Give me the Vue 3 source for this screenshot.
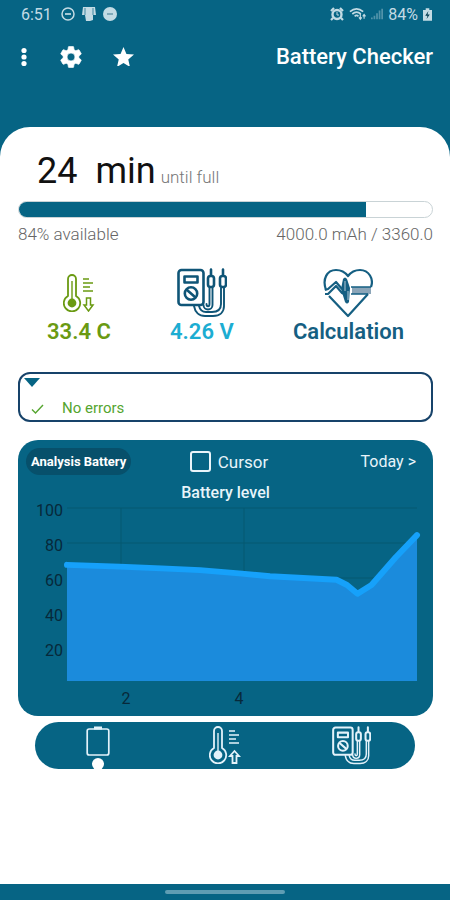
<script setup>
import { ref, computed } from 'vue'

/* ========== BATTERY STATE ========== */
const level = ref(84)
const capacity = ref('4000.0 mAh / 3360.0')
const minutesLeft = ref(24)
const showCursor = ref(false)
const activeTab = ref('level')

const readings = [
  { id: 'temp', label: '33.4 C' },
  { id: 'volt', label: '4.26 V' },
  { id: 'calc', label: 'Calculation' },
]

const tabs = [
  { id: 'level', label: 'Battery level' },
  { id: 'temp', label: 'Temperature' },
  { id: 'volt', label: 'Voltage' },
]

/* ========== CHART ========== */
// plot area inside the chart's view box
const plot = { left: 49, right: 399, bottom: 173, zero: 175 }

const yTicks = [100, 80, 60, 40, 20]
const xTicks = [
  { label: '2', line: 103, text: 108 },
  { label: '4', line: 226, text: 221 },
]

// share of the width (%) and battery level (%)
const samples = [
  [0, 67.5], [15, 66.5], [27, 65.5], [38, 64.5], [50, 62.5], [58, 61], [77, 59],
  [80, 56], [83, 51], [87, 56], [94, 72], [100, 84.5],
]

const toX = share => plot.left + (share / 100) * (plot.right - plot.left)
const toY = value => plot.zero - value * 1.75

const linePoints = computed(() => samples.map(([x, y]) => `${toX(x)},${toY(y)}`).join(' '))
const areaPoints = computed(
  () => `${plot.left},${plot.bottom} ${linePoints.value} ${plot.right},${plot.bottom}`
)
</script>

<template>
  <div class="app">
    <!-- ========== SHARED ICON SHAPES ========== -->
    <svg class="symbols" aria-hidden="true">
      <symbol id="meter" viewBox="0 0 50 50">
        <g fill="none" stroke="currentColor" stroke-width="2.6" stroke-linecap="round" stroke-linejoin="round">
          <rect x="1.5" y="2" width="25" height="35" rx="3" />
          <rect x="7.5" y="8.5" width="13" height="6" />
          <circle cx="14" cy="25.5" r="6.2" />
          <path d="M10 22l8 7M34 1.500v6M46 1.500v6" />
          <rect x="31" y="8" width="6" height="11" rx="2.5" />
          <rect x="43" y="8" width="6" height="11" rx="2.5" />
          <path d="M35.5 20v17c0 6-9 6-9 0M32.5 20v16c0 3-3 3-3 0M17 38c1 6 5 10 11 10h8c7 0 11-4 11-10V20M22 38c1 4 3 6 7 6h6c6 0 9-3 9-8V20" stroke-width="1.9" />
        </g>
      </symbol>
      <symbol id="thermo" viewBox="0 0 32 38">
        <g fill="none" stroke="currentColor" stroke-width="1.8" stroke-linejoin="round">
          <path d="M5 22V5a4 4 0 0 1 8 0v17a8.2 8.2 0 1 1-8 0z" />
          <path d="M9 27V7" stroke-width="1.4" />
          <path d="M20 5h6M20 9h10M20 13h7M20 17h10" stroke-width="1.4" />
        </g>
        <circle cx="9" cy="29" r="4.4" fill="currentColor" />
      </symbol>
    </svg>

    <!-- ========== STATUS BAR ========== -->
    <header class="top">
      <div class="status">
        <div class="status-group">
          <span class="clock">6:51</span>
          <svg class="s-icon" viewBox="0 0 14 14"><circle cx="7" cy="7" r="6" fill="none" stroke="currentColor" stroke-width="1.5" /><path d="M4 7h6" stroke="currentColor" stroke-width="1.7" /></svg>
          <svg class="s-icon" viewBox="0 0 14 14"><path d="M1 0h12l1 8h-3v5l-3 1H4L3 8H0z" fill="currentColor" /><path d="M3 1v7M11 1v7" stroke="#066484" stroke-width=".7" /></svg>
          <svg class="s-icon" viewBox="0 0 14 14"><circle cx="7" cy="7" r="7" fill="currentColor" /><path d="M4 7h6" stroke="#7fa9b9" stroke-width="2" /></svg>
        </div>
        <div class="status-group right">
          <svg class="s-icon" viewBox="0 0 14 14"><g fill="none" stroke="currentColor"><circle cx="7" cy="7.5" r="4.5" stroke-width="2.4" /><path d="M1 4l3-3M13 4l-3-3M3 11l-2 2M11 11l2 2" stroke-width="2.2" /><path d="M7 5v3h2" /></g></svg>
          <svg class="s-icon wide" viewBox="0 0 18 14"><g fill="none" stroke="currentColor" stroke-width="1.8"><path d="M1 4.5q7-6 14 0M3.5 7q4.5-4 9 0M6 9.5q2-2 4 0" /><path d="M12 7v5M10.5 10.5l1.5 2 1.5-2M16 12V8M14.5 9.5l1.5-2 1.5 2" stroke-width="1.2" /></g></svg>
          <svg class="s-icon dim" viewBox="0 0 14 14"><path d="M0 13v-2h2v2zM3 13V9h2v4zM6 13V6h2v7zM9 13V3h2v10zM12 13V1h2v12z" fill="currentColor" /></svg>
          <span class="clock">84%</span>
          <svg class="s-icon slim" viewBox="0 0 10 14"><path d="M3 0h4v2h3v12H0V2h3z" fill="currentColor" /><path d="M6 3L2.5 8.5H5L4 12l3.5-5H5z" fill="#033c50" /></svg>
        </div>
      </div>

      <!-- ========== TOOLBAR ========== -->
      <div class="toolbar">
        <button class="tool dots" aria-label="Menu">
          <svg viewBox="0 0 6 20"><g fill="currentColor"><circle cx="3" cy="3.5" r="2.6" /><circle cx="3" cy="10" r="2.6" /><circle cx="3" cy="16.5" r="2.6" /></g></svg>
        </button>
        <button class="tool gear" aria-label="Settings">
          <svg viewBox="2 2 20 20"><path fill="currentColor" stroke="currentColor" stroke-width=".6" d="M19.14 12.94c.04-.3.06-.61.06-.94 0-.32-.02-.64-.07-.94l2.03-1.58c.18-.14.23-.41.12-.61l-1.92-3.32c-.12-.22-.37-.29-.59-.22l-2.39.96c-.5-.38-1.03-.7-1.62-.94l-.36-2.54c-.04-.24-.24-.41-.48-.41h-3.84c-.24 0-.43.17-.47.41l-.36 2.54c-.59.24-1.13.57-1.62.94l-2.39-.96c-.22-.08-.47 0-.59.22L2.74 8.87c-.12.21-.08.47.12.61l2.03 1.58c-.05.3-.09.63-.09.94s.02.64.07.94l-2.03 1.58c-.18.14-.23.41-.12.61l1.92 3.32c.12.22.37.29.59.22l2.39-.96c.5.38 1.03.7 1.62.94l.36 2.54c.05.24.24.41.48.41h3.84c.24 0 .44-.17.47-.41l.36-2.54c.59-.24 1.13-.56 1.62-.94l2.39.96c.22.08.47 0 .59-.22l1.92-3.32c.12-.22.07-.47-.12-.61l-2.01-1.58zM12 15.6a3.6 3.6 0 1 1 0-7.2 3.6 3.6 0 0 1 0 7.2z" /></svg>
        </button>
        <button class="tool star" aria-label="Rate">
          <svg viewBox="2 2 20 19"><path fill="currentColor" d="M12 17.27L18.18 21l-1.64-7.03L22 9.24l-7.19-.61L12 2 9.19 8.63 2 9.24l5.46 4.73L5.82 21z" /></svg>
        </button>
        <h1>Battery Checker</h1>
      </div>
    </header>

    <main class="sheet">
      <!-- ========== CHARGE ========== -->
      <section class="charge">
        <div class="time">
          <span class="time-big">{{ minutesLeft }}</span>
          <span class="time-big">min</span>
          <span class="until">until full</span>
        </div>
        <div class="bar"><div class="bar-fill" :style="{ width: level + '%' }"></div></div>
        <div class="caption">
          <span>{{ level }}% available</span>
          <span>{{ capacity }}</span>
        </div>
      </section>

      <!-- ========== READINGS ========== -->
      <section class="readings">
        <button v-for="r in readings" :key="r.id" :class="['reading', r.id]">
          <span class="reading-icon">
            <svg v-if="r.id === 'temp'" class="thermo" viewBox="0 0 32 38">
              <use href="#thermo" width="32" height="38" />
              <path d="M23.5 24h4v7H30l-4.5 6-4.500-6h2.500z" fill="none" stroke="currentColor" stroke-width="1.5" />
            </svg>
            <svg v-else-if="r.id === 'volt'" class="meter" viewBox="0 0 50 50"><use href="#meter" width="50" height="50" /></svg>
            <svg v-else class="heart" viewBox="0 0 50 50">
              <path d="M29 19h19v7H29z" fill="#8ba5b8" />
              <g fill="none" stroke="currentColor" stroke-width="2.2" stroke-linejoin="round">
                <path d="M3 22C-1 11 4 2 13 2c5 0 9 2 12 6 3-4 7-6 12-6 9 0 14 9 11 17M6 28l19 20 20-22" />
                <path d="M2 26h3l8-8 6 7 2 1M2 22l3-1 8-7 6 7" />
                <path d="M28 19h20M28 26h17" stroke-width="1.400" />
              </g>
              <path d="M18 21l2-10q2-3 4 0l3 9-1 14q-2 3-4 0z" fill="currentColor" />
              <path d="M22 13v10M25 23v9" stroke="#9ab8c8" stroke-width="1.200" />
            </svg>
          </span>
          <span class="reading-label">{{ r.label }}</span>
        </button>
      </section>

      <!-- ========== ERRORS ========== -->
      <section class="errors">
        <svg class="arrow" viewBox="0 0 16 9"><path d="M0 0h16L8 9z" fill="#066484" /></svg>
        <div class="error-row">
          <svg class="check" viewBox="0 0 13 10"><path d="M1 5.5L4.5 9 12 1" fill="none" stroke="currentColor" stroke-width="1.4" /></svg>
          <span>No errors</span>
        </div>
      </section>

      <!-- ========== ANALYSIS CHART ========== -->
      <section class="panel">
        <div class="panel-head">
          <button class="analysis">Analysis Battery</button>
          <label class="cursor"><input v-model="showCursor" type="checkbox" />Cursor</label>
          <button class="today">Today &gt;</button>
        </div>
        <h2>Battery level</h2>
        <svg class="chart" viewBox="0 -13 415 221" role="img" aria-label="Battery level">
          <g stroke="#055870">
            <path v-for="t in yTicks" :key="t" :d="`M${plot.left} ${toY(t)}H${plot.right}`" />
            <path v-for="t in xTicks" :key="t.label" :d="`M${t.line} 0V${plot.bottom}`" />
          </g>
          <polygon :points="areaPoints" fill="#1b8bdc" />
          <polyline :points="linePoints" fill="none" stroke="#16a1fa" stroke-width="6" stroke-linecap="round" stroke-linejoin="round" />
          <g class="ticks">
            <text v-for="t in yTicks" :key="t" x="45" :y="toY(t) + 8" text-anchor="end">{{ t }}</text>
            <text v-for="t in xTicks" :key="t.label" :x="t.text" y="196" text-anchor="middle">{{ t.label }}</text>
          </g>
        </svg>
      </section>

      <!-- ========== CHART TABS ========== -->
      <nav class="tabs">
        <button
          v-for="tab in tabs"
          :key="tab.id"
          :class="['tab', { active: activeTab === tab.id }]"
          :aria-label="tab.label"
          @click="activeTab = tab.id"
        >
          <svg v-if="tab.id === 'level'" class="cell" viewBox="0 0 24 30"><g fill="none" stroke="currentColor" stroke-width="1.7"><rect x="1.2" y="3" width="21.6" height="26" rx="2" /><path d="M8 2h8" stroke-width="3" /></g></svg>
          <svg v-else-if="tab.id === 'temp'" class="thermo" viewBox="0 0 32 38">
            <use href="#thermo" width="32" height="38" />
            <path d="M23.5 37v-7H21l4.500-5 4.500 5h-2.500v7z" fill="none" stroke="currentColor" stroke-width="1.8" />
          </svg>
          <svg v-else class="meter" viewBox="0 0 50 50"><use href="#meter" width="50" height="50" /></svg>
        </button>
      </nav>
    </main>

    <footer class="gesture"><span></span></footer>
  </div>
</template>

<style>
body {
  margin: 0;
  background: #066484;
}
</style>

<style scoped>
.app {
  min-height: 100vh;
  display: flex;
  flex-direction: column;
  background: #066484;
  font-family: Roboto, 'Liberation Sans', sans-serif;
}

.symbols {
  position: absolute;
  width: 0;
  height: 0;
}

svg {
  display: block;
}

button {
  padding: 0;
  border: none;
  background: none;
  color: inherit;
  font: inherit;
  cursor: pointer;
}

/* Status bar */
.top {
  color: #fff;
  padding-bottom: 42px;
}

.status {
  display: flex;
  justify-content: space-between;
  align-items: center;
  height: 28px;
  padding: 0 18px 0 21px;
  color: #c3dbe4;
}

.status-group {
  display: flex;
  align-items: center;
  gap: 7px;
}

.clock {
  font-size: 16px;
}

.status-group .clock:first-child {
  margin-right: 2px;
}

.s-icon {
  width: 14px;
  height: 14px;
}

.s-icon.wide {
  width: 17px;
}

.s-icon.slim {
  width: 9px;
  height: 13px;
}

.s-icon.dim {
  width: 12px;
  opacity: 0.4;
}

.right {
  gap: 5px;
}

/* Toolbar */
.toolbar {
  display: flex;
  align-items: center;
  height: 57px;
  padding: 0 17px 0 21px;
}

.dots {
  width: 6px;
  margin-right: 33px;
}

.gear {
  width: 22px;
  margin-right: 31px;
}

.star {
  width: 21px;
}

h1 {
  margin: 0 0 0 auto;
  font-size: 22px;
  font-weight: 500;
}

/* White sheet */
.sheet {
  flex: 1;
  padding: 0 17px 20px 18px;
  border-radius: 30px 30px 0 0;
  background: #fff;
}

.time {
  display: flex;
  align-items: baseline;
  height: 74px;
  padding: 23px 0 0 19px;
  box-sizing: border-box;
  color: #111;
}

.time-big {
  font-size: 36px;
  line-height: 42px;
  margin-right: 18px;
}

.time-big + .time-big {
  margin-right: 5px;
}

.until {
  font-size: 17px;
  font-weight: 300;
  color: #777;
}

.bar {
  height: 17px;
  box-sizing: border-box;
  border: 1px solid #c9d3d6;
  border-radius: 9px;
  overflow: hidden;
}

.bar-fill {
  height: 100%;
  background: #066484;
}

.caption {
  display: flex;
  justify-content: space-between;
  margin-top: 6px;
  font-size: 17px;
  font-weight: 300;
  line-height: 20px;
  color: #666;
}

/* Readings */
.readings {
  display: flex;
  justify-content: space-between;
  margin-top: 24px;
  padding: 0 29px;
}

.reading {
  display: flex;
  flex-direction: column;
  align-items: center;
  font-size: 22px;
  font-weight: 600;
  line-height: 28px;
}

.reading-icon {
  display: flex;
  align-items: center;
  height: 50px;
}

.temp {
  color: #6a9a12;
}

.volt {
  color: #1cadd2;
}

.volt .reading-icon {
  color: #0f5577;
}

.calc {
  color: #155f82;
}

.thermo {
  width: 32px;
  height: 38px;
}

.meter,
.heart {
  width: 50px;
  height: 50px;
}

/* Errors */
.errors {
  margin-top: 26px;
  padding: 4px 4px 2px;
  border: 2px solid #17436a;
  border-radius: 12px;
}

.arrow {
  width: 16px;
  height: 9px;
}

.error-row {
  display: flex;
  align-items: center;
  gap: 18px;
  margin-top: 12px;
  padding-left: 7px;
  font-size: 15px;
  line-height: 19px;
  color: #55a52f;
}

.check {
  width: 13px;
  height: 10px;
}

/* Chart panel */
.panel {
  margin-top: 18px;
  border-radius: 20px;
  background: #066484;
  color: #e8f4fa;
}

.panel-head {
  display: grid;
  grid-template-columns: 1fr auto 1fr;
  align-items: center;
  height: 43px;
  padding: 0 17px 0 8px;
  font-size: 16px;
}

.analysis {
  justify-self: start;
  height: 27px;
  padding: 0 5px;
  border-radius: 14px;
  background: #07506b;
  color: #fff;
  font-size: 13px;
  font-weight: 700;
}

.cursor {
  display: flex;
  align-items: center;
  gap: 7px;
  margin-left: 16px;
  font-size: 17px;
}

.cursor input {
  appearance: none;
  width: 21px;
  height: 21px;
  margin: 0;
  border: 2px solid #e8f4fa;
  border-radius: 3px;
}

.cursor input:checked {
  background: #16a1fa;
}

.today {
  justify-self: end;
}

h2 {
  margin: 0;
  font-size: 16px;
  font-weight: 500;
  line-height: 20px;
  text-align: center;
}

/* the plot's headroom runs up behind the title */
.chart {
  width: 100%;
  height: auto;
  margin-top: -8px;
}

.ticks {
  fill: #06293a;
  font-size: 16px;
}

/* Tabs */
.tabs {
  display: flex;
  justify-content: space-between;
  margin: 6px 18px 0 17px;
  border-radius: 24px;
  background: #066484;
  color: #e3f2fa;
}

.tab {
  position: relative;
  flex: 1;
  display: flex;
  justify-content: center;
  height: 47px;
  padding-top: 4px;
}

.tab .meter {
  width: 39px;
  height: 39px;
}

.cell {
  width: 24px;
  height: 30px;
}

.active::after {
  content: '';
  position: absolute;
  bottom: -1px;
  left: calc(50% - 6px);
  width: 12px;
  height: 12px;
  border-radius: 50%;
  background: #fff;
}

/* Gesture bar */
.gesture {
  display: flex;
  justify-content: center;
  align-items: center;
  height: 16px;
}

.gesture span {
  width: 120px;
  height: 4px;
  border-radius: 2px;
  background: #5f9db3;
}
</style>
